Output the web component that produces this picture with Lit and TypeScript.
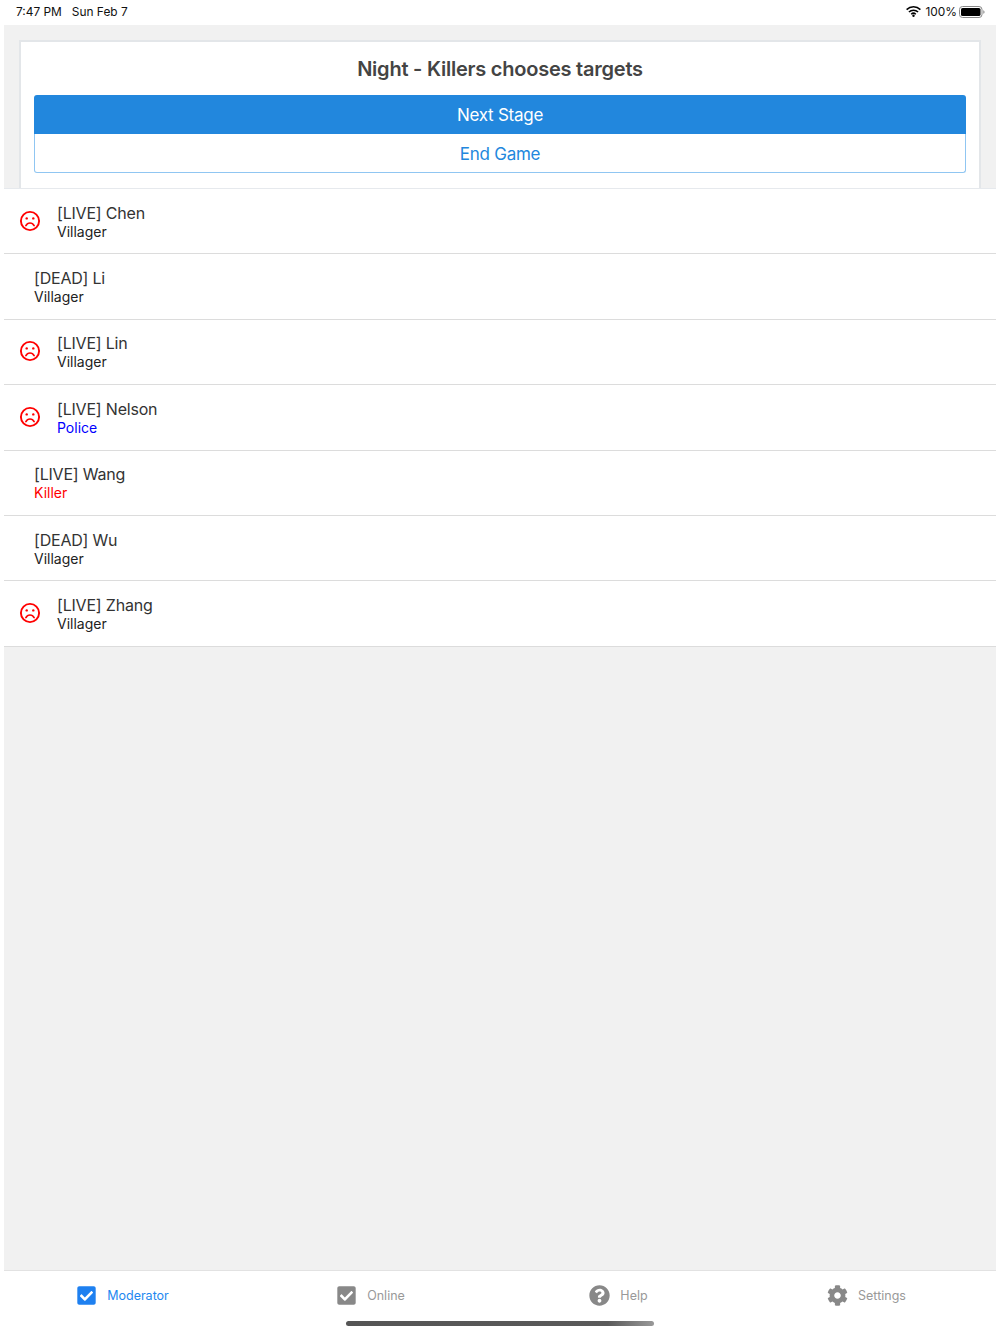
import { LitElement, html, css, svg } from "lit";
import { customElement } from "lit/decorators.js";

const CHECK = "M400 480H48c-26.51 0-48-21.49-48-48V80c0-26.51 21.49-48 48-48h352c26.51 0 48 21.49 48 48v352c0 26.51-21.49 48-48 48zm-204.686-98.059l184-184c6.248-6.248 6.248-16.379 0-22.627l-22.627-22.627c-6.248-6.248-16.379-6.249-22.628 0L184 302.745l-70.059-70.059c-6.248-6.248-16.379-6.248-22.628 0l-22.627 22.627c-6.248 6.248-6.248 16.379 0 22.627l104 104c6.249 6.25 16.379 6.25 22.628.001z";
const HELP = "M504 256c0 136.997-111.043 248-248 248S8 392.997 8 256C8 119.083 119.043 8 256 8s248 111.083 248 248zM262.655 90c-54.497 0-89.255 22.957-116.549 63.758-3.536 5.286-2.353 12.415 2.715 16.258l34.699 26.31c5.205 3.947 12.621 3.008 16.665-2.122 17.864-22.658 30.113-35.797 57.303-35.797 20.429 0 45.698 13.148 45.698 32.958 0 14.976-12.363 22.667-32.534 33.976C247.128 238.528 216 254.941 216 296v4c0 6.627 5.373 12 12 12h56c6.627 0 12-5.373 12-12v-1.333c0-28.462 83.186-29.647 83.186-106.667 0-58.002-60.165-102-116.531-102zM256 338c-25.365 0-46 20.635-46 46 0 25.364 20.635 46 46 46s46-20.636 46-46c0-25.365-20.635-46-46-46z";
const GEAR = "M487.4 315.7l-42.6-24.6c4.3-23.2 4.3-47 0-70.2l42.6-24.6c4.9-2.8 7.1-8.6 5.5-14-11.1-35.6-30-67.8-54.7-94.6-3.8-4.1-10-5.1-14.8-2.3L380.8 110c-17.9-15.4-38.5-27.3-60.8-35.1V25.8c0-5.6-3.9-10.5-9.4-11.7-36.7-8.2-74.3-7.8-109.2 0-5.5 1.2-9.4 6.1-9.4 11.7V75c-22.2 7.9-42.8 19.8-60.8 35.1L88.7 85.5c-4.9-2.8-11-1.9-14.8 2.3-24.7 26.7-43.6 58.9-54.7 94.6-1.7 5.4.6 11.2 5.5 14L67.3 221c-4.3 23.2-4.3 47 0 70.2l-42.6 24.6c-4.9 2.8-7.1 8.6-5.5 14 11.1 35.6 30 67.8 54.7 94.6 3.8 4.1 10 5.1 14.8 2.3l42.6-24.6c17.9 15.4 38.5 27.3 60.8 35.1v49.2c0 5.6 3.9 10.5 9.4 11.7 36.7 8.2 74.3 7.8 109.2 0 5.5-1.2 9.4-6.1 9.4-11.7v-49.2c22.2-7.9 42.8-19.8 60.8-35.1l42.6 24.6c4.9 2.8 11 1.9 14.8-2.3 24.7-26.7 43.6-58.9 54.7-94.6 1.5-5.5-.7-11.3-5.6-14.1zM256 336c-44.1 0-80-35.9-80-80s35.9-80 80-80 80 35.9 80 80-35.9 80-80 80z";

type Player = { name: string; role: string; sad: boolean; tone?: string };
const PLAYERS: Player[] = [
  { name: "[LIVE] Chen", role: "Villager", sad: true },
  { name: "[DEAD] Li", role: "Villager", sad: false },
  { name: "[LIVE] Lin", role: "Villager", sad: true },
  { name: "[LIVE] Nelson", role: "Police", sad: true, tone: "police" },
  { name: "[LIVE] Wang", role: "Killer", sad: false, tone: "killer" },
  { name: "[DEAD] Wu", role: "Villager", sad: false },
  { name: "[LIVE] Zhang", role: "Villager", sad: true },
];
const TABS = [
  { label: "Moderator", d: CHECK, vb: "0 0 448 512", active: true },
  { label: "Online", d: CHECK, vb: "0 0 448 512", active: false },
  { label: "Help", d: HELP, vb: "0 0 512 512", active: false },
  { label: "Settings", d: GEAR, vb: "0 0 512 512", active: false },
];

@customElement("app-root")
export class AppRoot extends LitElement {
  static styles = css`
    :host {
      display: flex;
      flex-direction: column;
      position: relative;
      height: 1334px;
      width: 1000px;
      overflow: hidden;
      background: #fff;
      font-family: Inter, "Liberation Sans", sans-serif;
      color: #333;
    }
    .status {
      height: 25px;
      flex: none;
      display: flex;
      align-items: center;
      justify-content: space-between;
      padding: 0 15px 2px 16px;
      box-sizing: border-box;
      font-size: 11.9px;
      color: #111;
    }
    .status .left { display: flex; gap: 10px; }
    .status .right { display: flex; align-items: center; gap: 2px; }
    .wifi { margin-right: 2px; }
    .main {
      flex: 1;
      margin: 0 4px;
      background: #f1f1f1;
      display: flex;
      flex-direction: column;
      min-height: 0;
    }
    .head { padding: 15px 15px 0; flex: none; }
    .card {
      box-sizing: border-box;
      height: 148px;
      background: #fff;
      border: 2px solid #e3e6e9;
      border-bottom: none;
      padding: 0 13px;
    }
    h1 {
      margin: 0;
      height: 53px;
      display: flex;
      align-items: center;
      justify-content: center;
      font-size: 20px;
      font-weight: 600;
      color: #444;
      letter-spacing: -0.23px;
    }
    .btn {
      box-sizing: border-box;
      height: 39px;
      display: flex;
      align-items: center;
      justify-content: center;
      font-size: 17px;
      letter-spacing: -0.25px;
    }
    .primary { background: #2287dd; color: #fff; border-radius: 3px 3px 0 0; }
    .outline {
      background: #fff;
      color: #2287dd;
      border: 1px solid #90c6f2;
      border-top: none;
      border-radius: 0 0 3px 3px;
      padding-top: 1px;
    }
    .list { background: #fff; flex: none; border-top: 1px solid #e6e9ed; }
    .row {
      box-sizing: border-box;
      height: 65.4px;
      display: flex;
      align-items: center;
      padding: 1px 30px 0;
      border-bottom: 1px solid #dcdcdc;
    }
    .row.sad { padding-left: 14px; }
    .face { flex: none; margin: -2px 15px 0 0; display: block; }
    .name { font-size: 16px; line-height: 20px; color: #333; letter-spacing: -0.2px; }
    .role { font-size: 14px; line-height: 18px; color: #222; }
    .police { color: #0000ff; }
    .killer { color: #ff0000; }
    .tabs {
      flex: none;
      height: 63px;
      margin: 0 4px;
      border-top: 1px solid #e2e2e2;
      display: grid;
      grid-template-columns: repeat(4, 1fr);
      background: #fff;
    }
    .tab {
      display: flex;
      align-items: center;
      justify-content: center;
      gap: 10px;
      padding: 0 11px 15px 0;
      color: #999;
      font-size: 12.5px;
    }
    .tab svg { height: 21px; width: 21px; display: block; }
    .tab path { fill: #888; }
    .tab.active { color: #1e88f0; }
    .tab.active path { fill: #1e80f0; }
    .home {
      position: absolute;
      left: 346px;
      top: 1321px;
      width: 308px;
      height: 5px;
      border-radius: 3px;
      background: linear-gradient(90deg, #555 0%, #5a5a5a 85%, #999 100%);
    }
  `;

  private face() {
    return svg`<svg class="face" width="24" height="24" viewBox="0 0 24 24" fill="none" stroke="#ff0000">
      <circle cx="12" cy="12" r="9.1" stroke-width="1.9"></circle>
      <circle cx="8.7" cy="9.4" r="1.2" fill="#ff0000" stroke="none"></circle>
      <circle cx="15.3" cy="9.4" r="1.2" fill="#ff0000" stroke="none"></circle>
      <path d="M7.9 16.6c.9-1.7 2.4-2.6 4.1-2.6s3.2.9 4.1 2.6" stroke-width="1.7" stroke-linecap="round"></path>
    </svg>`;
  }

  render() {
    return html`
      <div class="status">
        <div class="left"><span>7:47 PM</span><span>Sun Feb 7</span></div>
        <div class="right">
          <svg class="wifi" width="15" height="11" viewBox="0 0 15 11">
            <path d="M.6 3.6a10 10 0 0 1 13.8 0M2.9 6a6.7 6.7 0 0 1 9.2 0M5.2 8.2a3.4 3.4 0 0 1 4.6 0" fill="none" stroke="#000" stroke-width="1.5"></path>
            <circle cx="7.5" cy="9.8" r="1.2" fill="#000"></circle>
          </svg>
          <span>100%</span>
          <svg width="26" height="12" viewBox="0 0 26 12">
            <rect x=".5" y=".5" width="22.5" height="11" rx="3" fill="none" stroke="#888"></rect>
            <rect x="2" y="2" width="19.5" height="8" rx="1.6" fill="#000"></rect>
            <path d="M24.3 4.2c.8.2 1.2.9 1.2 1.8s-.4 1.6-1.2 1.8z" fill="#888"></path>
          </svg>
        </div>
      </div>
      <div class="main">
        <div class="head">
          <div class="card">
            <h1>Night - Killers chooses targets</h1>
            <div class="btn primary">Next Stage</div>
            <div class="btn outline">End Game</div>
          </div>
        </div>
        <div class="list">
          ${PLAYERS.map(
            (p) => html`<div class="row ${p.sad ? "sad" : ""}">
              ${p.sad ? this.face() : ""}
              <div>
                <div class="name">${p.name}</div>
                <div class="role ${p.tone ?? ""}">${p.role}</div>
              </div>
            </div>`
          )}
        </div>
      </div>
      <div class="tabs">
        ${TABS.map(
          (t) => html`<div class="tab ${t.active ? "active" : ""}">
            <svg viewBox=${t.vb}><path d=${t.d}></path></svg>
            <span>${t.label}</span>
          </div>`
        )}
      </div>
      <div class="home"></div>
    `;
  }
}
